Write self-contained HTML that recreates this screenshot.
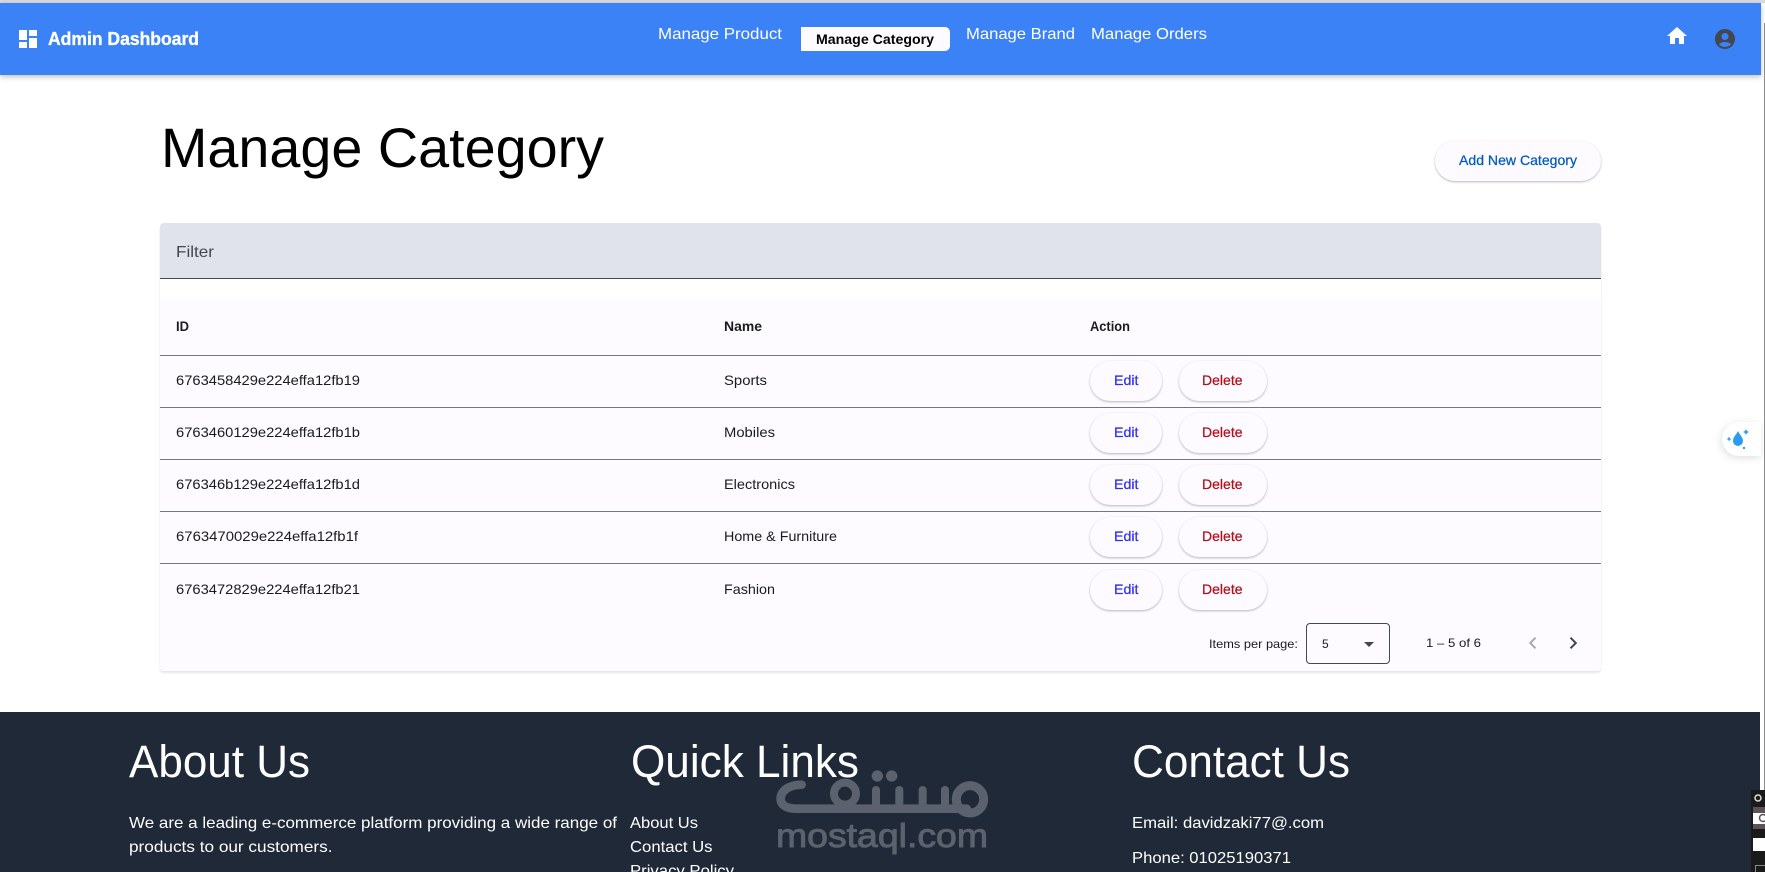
<!DOCTYPE html>
<html lang="en">
<head>
<meta charset="utf-8">
<title>Manage Category</title>
<style>
html,body{margin:0;padding:0;width:1765px;height:872px;overflow:hidden;background:#fff;font-family:"Liberation Sans",Arial,sans-serif}
.a{position:absolute;box-sizing:border-box}
.btn{background:#fdfbff;border-radius:20px;box-shadow:0 1px 2px rgba(0,0,0,.28),0 0 1px rgba(0,0,0,.04)}
.rule{left:160px;width:1441px;height:1px;background:#74777f}
svg{position:absolute;left:0;top:0}
text{font-family:"Liberation Sans",Arial,sans-serif}
</style>
</head>
<body>
<div class="a" style="left:0;top:0;width:1765px;height:3px;background:#d9d9d9"></div>
<div class="a" style="left:0;top:3px;width:1761px;height:72px;background:#3b82f6;box-shadow:0 2px 5px rgba(0,0,0,.25)"></div>
<div class="a" style="left:801px;top:27px;width:149px;height:24px;background:#fdfbff;border-radius:0 5px 5px 0"></div>
<div class="a btn" style="left:1435px;top:141px;width:166px;height:40px"></div>

<div class="a" style="left:160px;top:223px;width:1441px;height:448px;background:#fff;border-radius:4px;box-shadow:0 2px 2px rgba(0,0,0,.1),0 0 1px rgba(0,0,0,.05)"></div>
<div class="a" style="left:160px;top:223px;width:1441px;height:56px;background:#e0e2ec;border-bottom:1px solid #44474e;border-radius:4px 4px 0 0"></div>
<div class="a" style="left:160px;top:299px;width:1441px;height:372px;background:#fdfbff;border-radius:0 0 4px 4px"></div>
<div class="a rule" style="top:355px"></div>
<div class="a rule" style="top:407px"></div>
<div class="a rule" style="top:459px"></div>
<div class="a rule" style="top:511px"></div>
<div class="a rule" style="top:563px"></div>

<div class="a btn" style="left:1090px;top:361px;width:72px;height:40px"></div>
<div class="a btn" style="left:1178.500px;top:361px;width:88px;height:40px"></div>
<div class="a btn" style="left:1090px;top:413px;width:72px;height:40px"></div>
<div class="a btn" style="left:1178.500px;top:413px;width:88px;height:40px"></div>
<div class="a btn" style="left:1090px;top:465px;width:72px;height:40px"></div>
<div class="a btn" style="left:1178.500px;top:465px;width:88px;height:40px"></div>
<div class="a btn" style="left:1090px;top:517px;width:72px;height:40px"></div>
<div class="a btn" style="left:1178.500px;top:517px;width:88px;height:40px"></div>
<div class="a btn" style="left:1090px;top:570px;width:72px;height:40px"></div>
<div class="a btn" style="left:1178.500px;top:570px;width:88px;height:40px"></div>

<div class="a" style="left:1306px;top:623px;width:84px;height:41px;border:1px solid #44474e;border-radius:4px"></div>

<div class="a" style="left:0;top:712px;width:1760px;height:160px;background:#1f2937"></div>
<div class="a" style="left:1764px;top:23px;width:1px;height:767px;background:#8c8c8c"></div>

<div class="a" style="left:1722px;top:422px;width:39px;height:34px;background:#fff;border-radius:17px 0 0 17px;box-shadow:-1px 2px 8px rgba(0,0,0,.13)"></div>

<div class="a" style="left:1751px;top:790px;width:14px;height:82px;background:#1a1a1a"></div>
<div class="a" style="left:1753px;top:807px;width:12px;height:22px;background:#5c5258"></div>
<div class="a" style="left:1753px;top:813px;width:12px;height:11px;background:#fff"></div>
<div class="a" style="left:1753px;top:838px;width:12px;height:13px;background:#fff"></div>
<div class="a" style="left:1755px;top:865px;width:10px;height:7px;border:1px solid #888;border-right:0;border-bottom:0"></div>

<svg width="1765" height="872" viewBox="0 0 1765 872" xmlns="http://www.w3.org/2000/svg">
  <!-- logo -->
  <g fill="#fff">
    <rect x="19" y="30" width="8" height="10"/>
    <rect x="19" y="42" width="8" height="6"/>
    <rect x="29" y="30" width="8" height="6"/>
    <rect x="29" y="38" width="8" height="10"/>
  </g>
  <text x="48" y="45" font-size="18" font-weight="700" fill="#fff" stroke="#fff" stroke-width=".35" textLength="151" lengthAdjust="spacingAndGlyphs">Admin Dashboard</text>

  <!-- nav -->
  <text x="658" y="39" font-size="16" fill="#fff" textLength="124" lengthAdjust="spacingAndGlyphs">Manage Product</text>
  <text x="816" y="44" font-size="14" font-weight="700" fill="#000" textLength="118" lengthAdjust="spacingAndGlyphs">Manage Category</text>
  <text x="966" y="39" font-size="16" fill="#fff" textLength="109" lengthAdjust="spacingAndGlyphs">Manage Brand</text>
  <text x="1091" y="39" font-size="16" fill="#fff" textLength="116" lengthAdjust="spacingAndGlyphs">Manage Orders</text>

  <path transform="translate(1665 24)" fill="#fff" d="M10 20v-6h4v6h5v-8h3L12 3 2 12h3v8z"/>
  <path transform="translate(1713 27)" fill="#44474e" d="M12 2C6.48 2 2 6.48 2 12s4.48 10 10 10 10-4.48 10-10S17.52 2 12 2zm0 4c1.93 0 3.5 1.57 3.5 3.5S13.93 13 12 13s-3.5-1.57-3.5-3.5S10.07 6 12 6zm0 14c-2.03 0-4.43-.82-6.14-2.88C7.55 15.8 9.68 15 12 15s4.45.8 6.14 2.12C16.43 19.18 14.03 20 12 20z"/>

  <!-- title -->
  <text x="161" y="167" font-size="56" fill="#000" textLength="443" lengthAdjust="spacingAndGlyphs">Manage Category</text>
  <text x="1459" y="165" font-size="14" fill="#005cbb" stroke="#005cbb" stroke-width=".25" textLength="118" lengthAdjust="spacingAndGlyphs">Add New Category</text>

  <text x="176" y="257" font-size="16" fill="#44474e" textLength="38" lengthAdjust="spacingAndGlyphs">Filter</text>

  <!-- table head -->
  <g font-size="14" font-weight="700" fill="#1a1b1f">
    <text x="176" y="331" textLength="13" lengthAdjust="spacingAndGlyphs">ID</text>
    <text x="724" y="331" textLength="38" lengthAdjust="spacingAndGlyphs">Name</text>
    <text x="1090" y="331" textLength="40" lengthAdjust="spacingAndGlyphs">Action</text>
  </g>

  <!-- rows -->
  <g font-size="14" fill="#1a1b1f">
    <text x="176" y="385" textLength="184" lengthAdjust="spacingAndGlyphs">6763458429e224effa12fb19</text>
    <text x="724" y="385" textLength="43" lengthAdjust="spacingAndGlyphs">Sports</text>
    <text x="176" y="437" textLength="184" lengthAdjust="spacingAndGlyphs">6763460129e224effa12fb1b</text>
    <text x="724" y="437" textLength="51" lengthAdjust="spacingAndGlyphs">Mobiles</text>
    <text x="176" y="489" textLength="184" lengthAdjust="spacingAndGlyphs">676346b129e224effa12fb1d</text>
    <text x="724" y="489" textLength="71" lengthAdjust="spacingAndGlyphs">Electronics</text>
    <text x="176" y="541" textLength="182" lengthAdjust="spacingAndGlyphs">6763470029e224effa12fb1f</text>
    <text x="724" y="541" textLength="113" lengthAdjust="spacingAndGlyphs">Home &amp; Furniture</text>
    <text x="176" y="594" textLength="184" lengthAdjust="spacingAndGlyphs">6763472829e224effa12fb21</text>
    <text x="724" y="594" textLength="51" lengthAdjust="spacingAndGlyphs">Fashion</text>
  </g>
  <g font-size="14" fill="#3030f0" stroke="#3030f0" stroke-width=".25">
    <text x="1114" y="385" textLength="24.5" lengthAdjust="spacingAndGlyphs">Edit</text>
    <text x="1114" y="437" textLength="24.5" lengthAdjust="spacingAndGlyphs">Edit</text>
    <text x="1114" y="489" textLength="24.5" lengthAdjust="spacingAndGlyphs">Edit</text>
    <text x="1114" y="541" textLength="24.5" lengthAdjust="spacingAndGlyphs">Edit</text>
    <text x="1114" y="594" textLength="24.5" lengthAdjust="spacingAndGlyphs">Edit</text>
  </g>
  <g font-size="14" fill="#b0101a" stroke="#b0101a" stroke-width=".25">
    <text x="1202" y="385" textLength="40.5" lengthAdjust="spacingAndGlyphs">Delete</text>
    <text x="1202" y="437" textLength="40.5" lengthAdjust="spacingAndGlyphs">Delete</text>
    <text x="1202" y="489" textLength="40.5" lengthAdjust="spacingAndGlyphs">Delete</text>
    <text x="1202" y="541" textLength="40.5" lengthAdjust="spacingAndGlyphs">Delete</text>
    <text x="1202" y="594" textLength="40.5" lengthAdjust="spacingAndGlyphs">Delete</text>
  </g>

  <!-- paginator -->
  <g font-size="12" fill="#1a1b1f">
    <text x="1209" y="648" textLength="89" lengthAdjust="spacingAndGlyphs">Items per page:</text>
    <text x="1322" y="648" textLength="7">5</text>
    <text x="1426" y="647" textLength="55" lengthAdjust="spacingAndGlyphs">1 – 5 of 6</text>
  </g>
  <path fill="#44474e" d="M1364 642h10l-5 5z"/>
  <path transform="translate(1520.8 631)" fill="#a9a9ad" d="M15.41 7.41L14 6l-6 6 6 6 1.41-1.41L10.83 12z"/>
  <path transform="translate(1561.2 631)" fill="#44474e" d="M10 6L8.59 7.41 13.17 12l-4.58 4.59L10 18l6-6z"/>

  <!-- footer -->
  <g font-size="45" fill="#fff">
    <text x="129" y="777" textLength="181" lengthAdjust="spacingAndGlyphs">About Us</text>
    <text x="631" y="777" textLength="228" lengthAdjust="spacingAndGlyphs">Quick Links</text>
    <text x="1132" y="777" textLength="218" lengthAdjust="spacingAndGlyphs">Contact Us</text>
  </g>
  <g font-size="16" fill="#fff">
    <text x="129" y="828" textLength="488" lengthAdjust="spacingAndGlyphs">We are a leading e-commerce platform providing a wide range of</text>
    <text x="129" y="852" textLength="203.5" lengthAdjust="spacingAndGlyphs">products to our customers.</text>
    <text x="630" y="828" textLength="68" lengthAdjust="spacingAndGlyphs">About Us</text>
    <text x="630" y="852" textLength="82.5" lengthAdjust="spacingAndGlyphs">Contact Us</text>
    <text x="630" y="876" textLength="104" lengthAdjust="spacingAndGlyphs">Privacy Policy</text>
    <text x="1132" y="828" textLength="192" lengthAdjust="spacingAndGlyphs">Email: davidzaki77@.com</text>
    <text x="1132" y="863" textLength="159" lengthAdjust="spacingAndGlyphs">Phone: 01025190371</text>
  </g>

  <!-- watermark -->
  <g opacity=".4">
    <g transform="translate(770 762) scale(.33333)" fill="none" stroke="#b5b7be" stroke-linecap="round">
      <path stroke-width="26" d="M95 68C52 68 32 90 32 110C32 132 54 140 80 140H590"/>
      <circle cx="600" cy="112" r="41" stroke-width="27"/>
      <circle cx="225" cy="95" r="33" stroke-width="24"/>
      <path stroke-width="24" d="M318 84V140M388 84V140M458 84V140M525 84V140"/>
      <circle cx="322" cy="42" r="17" fill="#b5b7be" stroke="none"/>
      <circle cx="365" cy="42" r="17" fill="#b5b7be" stroke="none"/>
    </g>
    <text x="776" y="847" font-size="33" fill="#b5b7be" stroke="#b5b7be" stroke-width=".9" textLength="212" lengthAdjust="spacingAndGlyphs">mostaql.com</text>
  </g>

  <!-- side widget -->
  <g fill="#2c9cf2">
    <path d="M1738 431c-1.6 3.5-5 6-5 10a5 5 0 0 0 10 0c0-4-3.500-6.500-5-10z"/>
    <path d="M1729 436.500l.8 1.700 1.700.8-1.700.8-.8 1.700-.8-1.700-1.700-.8 1.700-.8z"/>
    <path d="M1746 429l1 2 2 1-2 1-1 2-1-2-2-1 2-1z"/>
    <circle cx="1744" cy="448" r="1.200"/>
  </g>

  <!-- bottom-right widget glyphs -->
  <circle cx="1758" cy="798" r="3" fill="none" stroke="#ddd" stroke-width="1.500"/>
  <circle cx="1763" cy="818" r="3.500" fill="none" stroke="#555" stroke-width="1.500"/>
</svg>
</body>
</html>
